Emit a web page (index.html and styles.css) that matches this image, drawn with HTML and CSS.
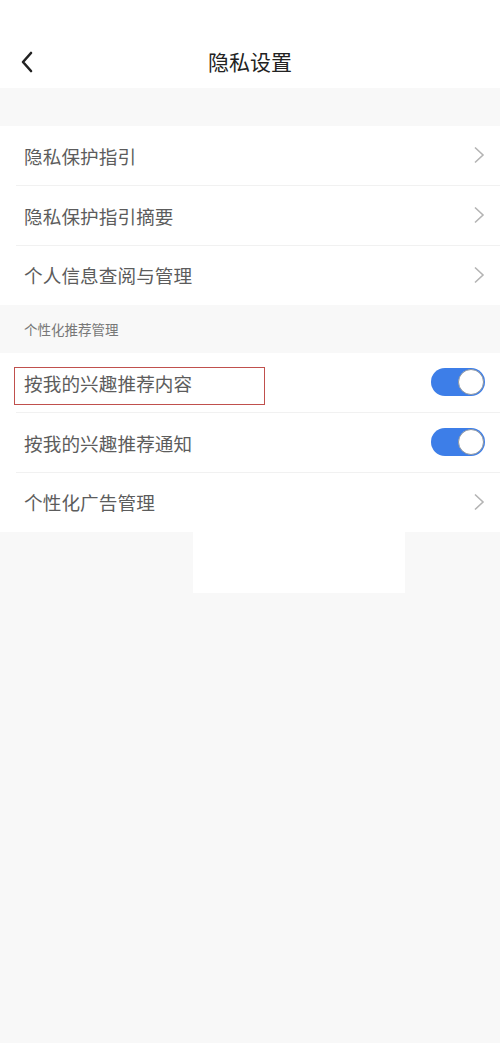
FILE: index.html
```html
<!DOCTYPE html>
<html lang="zh-CN">
<head>
<meta charset="utf-8">
<title>隐私设置</title>
<link rel="stylesheet" href="styles.css">
</head>
<body>
<div class="page">
  <header class="nav">
    <span class="back">
      <svg width="14" height="22" viewBox="0 0 14 22"><path d="M11 2 L3 11 L11 20" fill="none" stroke="#222" stroke-width="2.6" stroke-linecap="round" stroke-linejoin="round"/></svg>
    </span>
    <h1 class="title">隐私设置</h1>
  </header>
  <div class="spacer"></div>
  <ul class="group">
    <li class="row"><span class="label">隐私保护指引</span><span class="chev"><svg width="12" height="18" viewBox="0 0 12 18"><path d="M2 1.5 L10 9 L2 16.5" fill="none" stroke="#b4b4b4" stroke-width="1.6"/></svg></span></li>
    <li class="row"><span class="label">隐私保护指引摘要</span><span class="chev"><svg width="12" height="18" viewBox="0 0 12 18"><path d="M2 1.5 L10 9 L2 16.5" fill="none" stroke="#b4b4b4" stroke-width="1.6"/></svg></span></li>
    <li class="row last"><span class="label">个人信息查阅与管理</span><span class="chev"><svg width="12" height="18" viewBox="0 0 12 18"><path d="M2 1.5 L10 9 L2 16.5" fill="none" stroke="#b4b4b4" stroke-width="1.6"/></svg></span></li>
  </ul>
  <div class="section">个性化推荐管理</div>
  <ul class="group">
    <li class="row marked"><span class="label">按我的兴趣推荐内容</span><span class="toggle on"><span class="knob"></span></span><span class="mark"></span></li>
    <li class="row"><span class="label">按我的兴趣推荐通知</span><span class="toggle on"><span class="knob"></span></span></li>
    <li class="row last"><span class="label">个性化广告管理</span><span class="chev"><svg width="12" height="18" viewBox="0 0 12 18"><path d="M2 1.5 L10 9 L2 16.5" fill="none" stroke="#b4b4b4" stroke-width="1.6"/></svg></span></li>
  </ul>
  <div class="patch"></div>
</div>
</body>
</html>
```
FILE: styles.css
```css
* { box-sizing: border-box; }
html, body { margin: 0; padding: 0; }
body {
  background: #f8f8f8;
  font-family: "Noto Sans CJK SC", "Noto Sans", sans-serif;
  width: 500px;
  height: 1043px;
  overflow: hidden;
}
.page { position: relative; }
.nav {
  height: 88px;
  background: #fff;
  position: relative;
  display: flex;
  align-items: flex-end;
  justify-content: center;
  padding-bottom: 12px;
}
.back {
  position: absolute;
  left: 20px;
  top: 51px;
  display: flex;
}
.title {
  margin: 0;
  font-size: 21px;
  font-weight: 400;
  color: #222;
  line-height: 30px;
}
.spacer { height: 38px; }
.group {
  list-style: none;
  margin: 0;
  padding: 0;
  background: #fff;
}
.row {
  position: relative;
  height: 60px;
  display: flex;
  align-items: center;
  justify-content: space-between;
  padding: 0 15px 2px 24px;
}
.row::after {
  content: "";
  position: absolute;
  left: 16px;
  right: 0;
  bottom: 0;
  height: 1px;
  background: #f1f1f1;
}
.row.last::after { display: none; }
.row.last { height: 59px; }
.label {
  font-size: 18.6px;
  color: #5c5c5c;
  letter-spacing: 0.1px;
}
.chev { display: flex; }
.section {
  height: 48px;
  padding-left: 24px;
  display: flex;
  align-items: center;
  font-size: 13.5px;
  color: #777;
}
.toggle {
  width: 54px;
  height: 28px;
  border-radius: 14px;
  background: #3d7ee8;
  position: relative;
  display: block;
}
.knob {
  position: absolute;
  right: 1px;
  top: 1px;
  width: 26px;
  height: 26px;
  border-radius: 50%;
  background: #fff;
  border: 1px solid #9097a0;
}
.mark {
  position: absolute;
  left: 14px;
  top: 14px;
  width: 251px;
  height: 38px;
  border: 1.5px solid #c0504d;
}
.patch {
  position: absolute;
  left: 193px;
  top: 532px;
  width: 212px;
  height: 61px;
  background: #fff;
}
```
